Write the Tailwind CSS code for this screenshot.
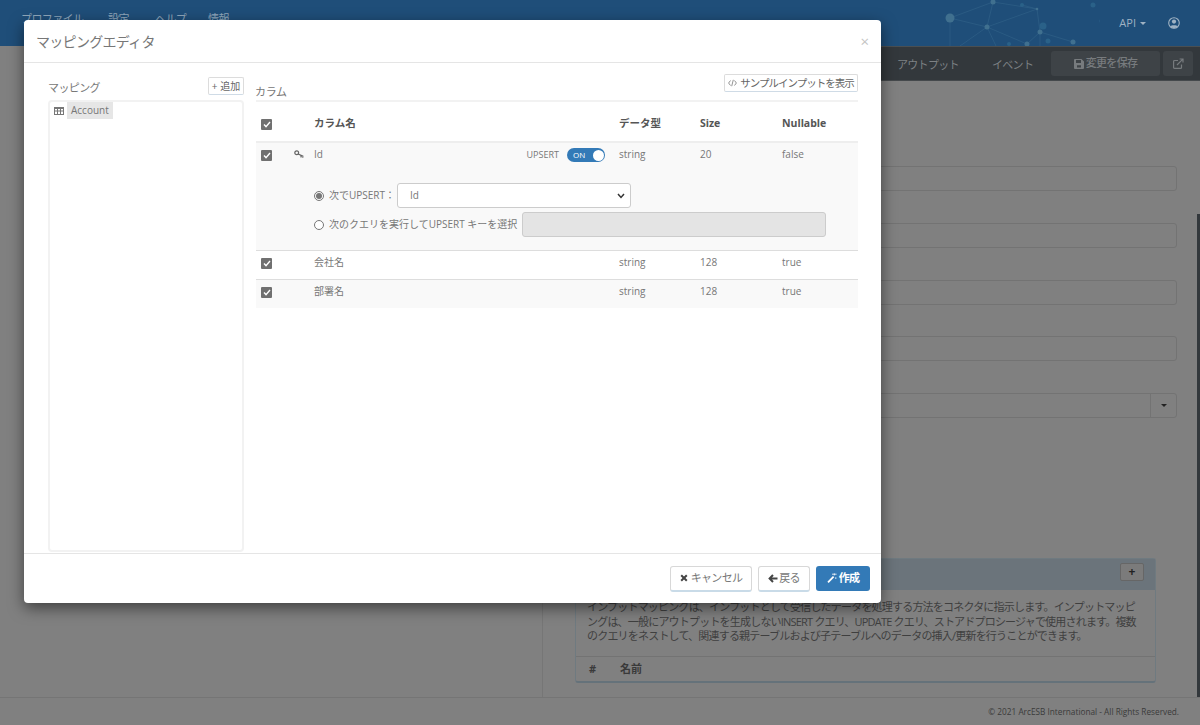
<!DOCTYPE html>
<html lang="ja">
<head>
<meta charset="utf-8">
<title>マッピングエディタ</title>
<script src="https://cdn.jsdelivr.net/npm/@tailwindcss/browser@4"></script>
</head>
<body class="w-[1200px] h-[725px] overflow-hidden relative bg-[#808080] text-[#777] font-['Open_Sans','Noto_Sans_CJK_JP',sans-serif]">

<!-- page behind the dialog (already dimmed) -->
<div class="h-[725px] flex flex-col">
    <header class="h-[46px] shrink-0 relative overflow-hidden bg-[#1f4e79] flex items-center justify-between pl-[21px] pr-[20px]">
        <svg class="absolute left-[930px] top-0" width="170" height="46" viewBox="0 0 170 46" fill="none">
            <g stroke="#2f6087" stroke-width="0.7">
                <path d="M20 18L63 2L57 27Z"/><path d="M63 2L107 9L57 27L97 44"/><path d="M107 9L110 32L97 44"/><path d="M57 27L66 46M20 18L20 46M110 32V46M57 27L30 46"/><path d="M92 5L107 9M143 42L110 32"/>
            </g>
            <g fill="#40708f">
                <circle cx="20" cy="18" r="4.5"/><circle cx="63" cy="2" r="2.5"/><circle cx="57" cy="27" r="2.5"/><circle cx="107" cy="9" r="1.3"/>
                <circle cx="110" cy="32" r="2.5"/><circle cx="97" cy="44" r="2.5"/><circle cx="143" cy="42" r="2.5"/>
            </g>
            <g fill="#2a6188">
                <circle cx="163" cy="5" r="2.5"/><circle cx="113" cy="26" r="3.5"/><circle cx="92" cy="5" r="2"/><circle cx="172" cy="21" r="2.5"/><circle cx="118" cy="41" r="2.5"/><circle cx="79" cy="44" r="2"/>
            </g>
        </svg>
        <nav class="flex text-[11px] tracking-[-0.6px] text-[#8fa6ba] self-start pt-[11px] whitespace-nowrap">
            <span class="w-[87px]">プロファイル</span><span class="w-[47px]">設定</span><span class="w-[53px]">ヘルプ</span><span>情報</span>
        </nav>
        <div class="flex items-center text-[#9fb2c3] text-[11px] relative">
            <span>API</span>
            <span class="ml-[4px] mr-[22px] border-x-[3px] border-x-transparent border-t-[3px] border-t-[#9fb2c3]"></span>
            <svg width="12" height="12" viewBox="0 0 12 12"><circle cx="6" cy="6" r="5.3" fill="none" stroke="#9fb2c3" stroke-width="1.1"/><circle cx="6" cy="4.6" r="2.1" fill="#9fb2c3"/><path d="M2.3 9.6C3 7.8 9 7.8 9.7 9.6L6 11.4Z" fill="#9fb2c3"/></svg>
        </div>
    </header>

    <div class="h-[35px] shrink-0 ml-[542px] bg-[#33383c] border-t border-[#4a4f52] border-b border-b-[#45494c] flex items-center pl-[355px] text-[11px] tracking-[-0.7px] text-[#7d8184] whitespace-nowrap">
        <span class="w-[61px] pt-[4px]">アウトプット</span>
        <span class="ml-[34px] w-[41px] pt-[4px]">イベント</span>
        <span class="ml-[18px] w-[109px] h-[25px] rounded-[3px] bg-[#3e4347] flex items-center justify-center gap-[2px] font-medium text-[#777b7e]">
            <svg width="10" height="10" viewBox="0 0 10 10"><path d="M0 1Q0 0 1 0H7.5L10 2.5V9Q10 10 9 10H1Q0 10 0 9ZM2 1V4H7V1ZM3 6.2V8.6H7V6.2Z" fill="#777b7e" fill-rule="evenodd"/></svg>
            変更を保存
        </span>
        <span class="ml-[3px] w-[30px] h-[25px] rounded-[3px] bg-[#3e4347] flex items-center justify-center">
            <svg width="11" height="11" viewBox="0 0 11 11" fill="none" stroke="#777b7e" stroke-width="1.2"><path d="M8.5 6.5V9.4Q8.5 10.4 7.5 10.4H1.6Q.6 10.4.6 9.4V3.5Q.6 2.5 1.6 2.5H5"/><path d="M4 7L9.6 1.4M6.6 1H10V4.4"/></svg>
        </span>
    </div>

    <main class="flex-1 flex min-h-0">
        <div class="w-[542px] shrink-0"></div>
        <section class="w-[655px] border-l border-[#767676] pl-[32px] pr-[20px]">
            <div class="flex flex-col gap-[32px] pt-[85px] -ml-[32px]">
                <div class="h-[25px] border border-[#737373] rounded-[3px]"></div>
                <div class="h-[25px] border border-[#737373] rounded-[3px]"></div>
                <div class="h-[25px] border border-[#737373] rounded-[3px]"></div>
                <div class="h-[25px] -mt-[1px] border border-[#737373] rounded-[3px]"></div>
                <div class="h-[25px] border border-[#737373] rounded-[3px] flex justify-end">
                    <span class="w-[26px] border-l border-[#737373] flex items-center justify-center">
                        <span class="border-x-[3px] border-x-transparent border-t-[3px] border-t-[#222]"></span>
                    </span>
                </div>
            </div>
            <div class="mt-[140px] w-[581px] h-[125px] border border-[#6f7a80] rounded-[3px] border-b-2 border-b-[#65727a]">
                <div class="h-[31px] bg-[#6b747b] flex items-center justify-end pr-[11px] pb-[5px]">
                    <span class="w-[24px] h-[18px] rounded-[2px] border border-[#666] bg-[#7b7b7b] flex items-center justify-center text-[#222] font-bold text-[12px]">+</span>
                </div>
                <p class="px-[11px] pt-[10px] text-[11px] leading-[14.5px] tracking-[-0.8px] text-[#3f3f3f] h-[66px] whitespace-nowrap">インプットマッピングは、インプットとして受信したデータを処理する方法をコネクタに指示します。インプットマッピ<br>ングは、一般にアウトプットを生成しないINSERT クエリ、UPDATE クエリ、ストアドプロシージャで使用されます。複数<br>のクエリをネストして、関連する親テーブルおよび子テーブルへのデータの挿入/更新を行うことができます。</p>
                <div class="h-[25px] border-t border-[#737373] flex items-center text-[11px] font-bold text-[#3a3a3a]">
                    <span class="w-[44px] pl-[13px]">#</span><span>名前</span>
                </div>
            </div>
        </section>
        <div class="w-[3px] flex flex-col"><div class="h-[133px]"></div><div class="flex-1 bg-[#33383c]"></div></div>
    </main>

    <footer class="h-[28px] shrink-0 border-t border-[#757575] flex items-center justify-end pr-[21px] pt-[2px] text-[8.25px] text-[#3a3a3a]">© 2021 ArcESB International - All Rights Reserved.</footer>
</div>

<!-- dialog -->
<div class="absolute left-[24px] top-[20px] w-[857px] h-[583px] bg-white rounded-[4px] shadow-[0_5px_15px_rgba(0,0,0,0.5)] flex flex-col">
    <div class="h-[43px] shrink-0 border-b border-[#e5e5e5] flex items-center justify-between pl-[12px] pr-[12px]">
        <h4 class="text-[14px] tracking-[-0.7px] text-[#777]">マッピングエディタ</h4>
        <span class="text-[15px] text-[#c4c4c4] leading-none">×</span>
    </div>

    <div class="flex-1 min-h-0 flex pl-[24px] pr-[23px] border-b border-[#e5e5e5]">
        <!-- mapping list -->
        <div class="w-[196px] shrink-0 pt-[15px] mr-[12px] flex flex-col">
            <div class="h-[23px] -mt-[1px] flex items-start justify-between">
                <span class="text-[11px] tracking-[-0.6px] pt-[3px]">マッピング</span>
                <button class="h-[18px] w-[36px] border border-[#dcdcdc] border-b-[#cfdbe6] rounded-[2px] text-[10px] text-[#666] leading-none whitespace-nowrap">+ 追加</button>
            </div>
            <div class="mb-[1px] flex-1 border-2 border-[#f2f2f2] rounded-[4px] pl-[4px]">
                <div class="flex items-center gap-[3px]">
                    <svg width="10" height="8" viewBox="0 0 10 8"><path d="M0 0H10V8H0ZM1 2V3.5H3V2ZM4 2V3.5H6V2ZM7 2V3.5H9V2ZM1 4.5V7H3V4.5ZM4 4.5V7H6V4.5ZM7 4.5V7H9V4.5Z" fill="#777" fill-rule="evenodd"/></svg>
                    <span class="bg-[#e6e6e6] h-[17px] px-[4px] text-[10px] leading-[17px] text-[#777]">Account</span>
                </div>
            </div>
        </div>

        <!-- columns -->
        <div class="flex-1 min-w-0 pt-[11px]">
            <div class="h-[28px] border-b-2 border-[#f2f2f2] flex justify-between">
                <span class="text-[11px] tracking-[-0.3px] pt-[10px] -ml-[1px]">カラム</span>
                <button class="h-[18px] w-[134px] border border-[#dcdcdc] border-b-[#cfdbe6] rounded-[2px] text-[10.5px] tracking-[-1px] text-[#666] leading-none whitespace-nowrap flex items-center justify-center gap-[3px]">
                    <svg width="9" height="8" viewBox="0 0 9 8" fill="none" stroke="#777" stroke-width="0.8"><path d="M2.5 1.5L.6 4L2.5 6.5M6.5 1.5L8.4 4L6.5 6.5M5.3 .8L3.7 7.2"/></svg>
                    サンプルインプットを表示
                </button>
            </div>
            <table class="w-[602px] table-fixed border-collapse text-[10px]">
                <colgroup>
                    <col class="w-[33px]"><col class="w-[20px]"><col class="w-[305px]"><col class="w-[81px]"><col class="w-[82px]"><col class="w-[81px]">
                </colgroup>
                <thead>
                    <tr class="h-[40px] border-b-2 border-[#eee] text-[10.5px] text-[#555] text-left">
                        <th class="pl-[5px] pt-[5px] font-normal">
                            <span class="w-[11px] h-[11px] rounded-[1px] bg-[#707070] flex items-center justify-center"><svg width="8" height="7" viewBox="0 0 8 7" fill="none" stroke="#fff" stroke-width="1.4"><path d="M1 3.6L3 5.6L7 1"/></svg></span>
                        </th>
                        <th></th>
                        <th class="pl-[5px] pt-[5px] font-bold">カラム名</th>
                        <th class="pl-[5px] pt-[5px] font-bold">データ型</th>
                        <th class="pl-[5px] pt-[5px] font-bold">Size</th>
                        <th class="pl-[5px] pt-[5px] font-bold">Nullable</th>
                    </tr>
                </thead>
                <tbody>
                    <tr class="bg-[#f9f9f9] align-top">
                        <td class="pl-[5px] pt-[7px]">
                            <span class="w-[11px] h-[11px] rounded-[1px] bg-[#707070] flex items-center justify-center"><svg width="8" height="7" viewBox="0 0 8 7" fill="none" stroke="#fff" stroke-width="1.4"><path d="M1 3.6L3 5.6L7 1"/></svg></span>
                        </td>
                        <td class="pl-[5px] pt-[7px]">
                            <svg width="10" height="9" viewBox="0 0 10 9" fill="none" stroke="#666" stroke-width="1.2"><circle cx="2.7" cy="2.8" r="1.9"/><path d="M4.2 4L9.3 6.4M7 5.2V7.4M8.8 6.2V7.8"/></svg>
                        </td>
                        <td class="pl-[5px] pr-[9px] pt-[4px]">
                            <div class="flex items-start justify-between">
                                <span>Id</span>
                                <div class="flex items-center text-[9px] gap-[8px] pt-[1px]">
                                    <span>UPSERT</span>
                                    <span class="w-[38px] h-[14px] rounded-full bg-[#337ab7] flex items-center justify-between pl-[6px] pr-[1.5px] text-white text-[8px]">ON<span class="w-[11px] h-[11px] rounded-full bg-white"></span></span>
                                </div>
                            </div>
                        </td>
                        <td class="pl-[5px] pt-[4px]">string</td>
                        <td class="pl-[5px] pt-[4px]">20</td>
                        <td class="pl-[5px] pt-[4px]">false</td>
                    </tr>
                    <tr class="bg-[#f9f9f9] border-b border-[#ddd]">
                        <td colspan="2"></td>
                        <td colspan="4" class="pl-[5px] pt-[21px] pb-[13px]">
                            <div class="flex items-center h-[25px]">
                                <span class="w-[10px] h-[10px] rounded-full border border-[#777] flex items-center justify-center"><span class="w-[6px] h-[6px] rounded-full bg-[#777]"></span></span>
                                <span class="ml-[5px] w-[68px] text-[10px]">次でUPSERT：</span>
                                <span class="w-[234px] h-[25px] bg-white border border-[#ccc] rounded-[3px] pl-[12px] pr-[5px] flex items-center justify-between text-[10px]">Id
                                    <svg width="8" height="6" viewBox="0 0 8 6" fill="none" stroke="#333" stroke-width="1.5"><path d="M1 1L4 4.4L7 1"/></svg>
                                </span>
                            </div>
                            <div class="flex items-center h-[25px] mt-[4px]">
                                <span class="w-[10px] h-[10px] rounded-full border border-[#777] bg-white"></span>
                                <span class="ml-[5px] w-[193px] text-[10px] whitespace-nowrap">次のクエリを実行してUPSERT キーを選択</span>
                                <span class="w-[304px] h-[25px] bg-[#e4e4e4] border border-[#ccc] rounded-[3px]"></span>
                            </div>
                        </td>
                    </tr>
                    <tr class="h-[29px] border-b border-[#ddd] align-top">
                        <td class="pl-[5px] pt-[7px]">
                            <span class="w-[11px] h-[11px] rounded-[1px] bg-[#707070] flex items-center justify-center"><svg width="8" height="7" viewBox="0 0 8 7" fill="none" stroke="#fff" stroke-width="1.4"><path d="M1 3.6L3 5.6L7 1"/></svg></span>
                        </td>
                        <td></td>
                        <td class="pl-[5px] pt-[4px]">会社名</td>
                        <td class="pl-[5px] pt-[4px]">string</td>
                        <td class="pl-[5px] pt-[4px]">128</td>
                        <td class="pl-[5px] pt-[4px]">true</td>
                    </tr>
                    <tr class="h-[28px] bg-[#f9f9f9] align-top">
                        <td class="pl-[5px] pt-[7px]">
                            <span class="w-[11px] h-[11px] rounded-[1px] bg-[#707070] flex items-center justify-center"><svg width="8" height="7" viewBox="0 0 8 7" fill="none" stroke="#fff" stroke-width="1.4"><path d="M1 3.6L3 5.6L7 1"/></svg></span>
                        </td>
                        <td></td>
                        <td class="pl-[5px] pt-[4px]">部署名</td>
                        <td class="pl-[5px] pt-[4px]">string</td>
                        <td class="pl-[5px] pt-[4px]">128</td>
                        <td class="pl-[5px] pt-[4px]">true</td>
                    </tr>
                </tbody>
            </table>
        </div>
    </div>

    <div class="h-[49px] shrink-0 flex items-center justify-end gap-[6px] pr-[11px] text-[11px] tracking-[-0.7px]">
        <button class="w-[82px] h-[26px] border border-[#d8d8d8] border-b-2 border-b-[#c9dbe8] rounded-[3px] text-[#777] flex items-center justify-center gap-[3px]">
            <svg width="8" height="8" viewBox="0 0 8 8" stroke="#444" stroke-width="2"><path d="M1.2 1.2L6.8 6.8M6.8 1.2L1.2 6.8"/></svg>キャンセル
        </button>
        <button class="w-[52px] h-[26px] border border-[#d8d8d8] border-b-2 border-b-[#c9dbe8] rounded-[3px] text-[#777] flex items-center justify-center gap-[1px]">
            <svg width="10" height="9" viewBox="0 0 10 9" fill="none" stroke="#444" stroke-width="2"><path d="M5 1L1.6 4.5L5 8M2 4.5H9.5"/></svg>戻る
        </button>
        <button class="w-[54px] h-[25px] -mt-[1px] rounded-[3px] bg-[#337ab7] text-white font-bold flex items-center justify-center gap-[2px]">
            <svg width="10" height="10" viewBox="0 0 10 10" fill="none" stroke="#fff"><path d="M1 9.3L6.6 3.7" stroke-width="1.8"/><path d="M5 1.2H9.6M7.3 .4V2.4M8.8 4.2V6" stroke-width="0.8"/></svg>作成
        </button>
    </div>
</div>

</body>
</html>
